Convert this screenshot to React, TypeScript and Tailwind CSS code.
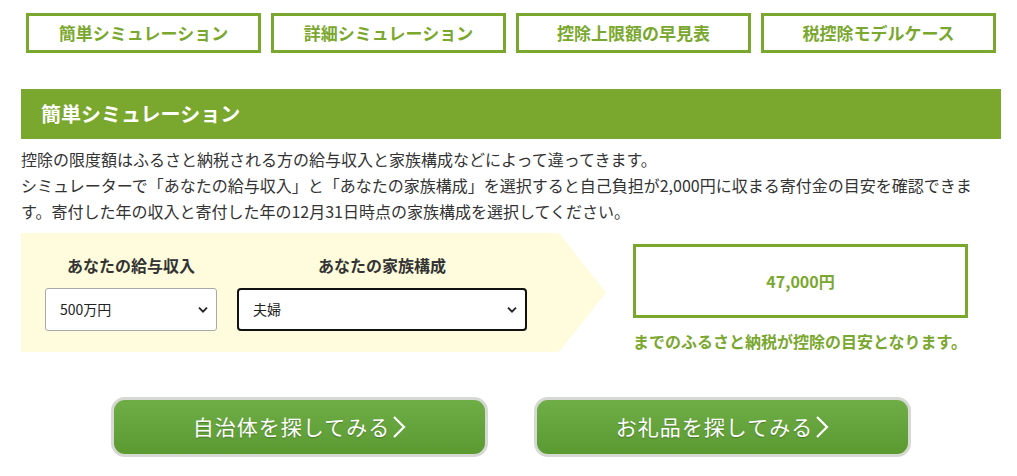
import React from "react";

const FONT = { fontFamily: '"Noto Sans CJK JP", "Noto Sans", sans-serif' };

const tabs = ["簡単シミュレーション", "詳細シミュレーション", "控除上限額の早見表", "税控除モデルケース"];

function Chevron() {
  return (
    <svg width="10" height="7" viewBox="0 0 10 7" className="pointer-events-none absolute right-[8px] top-1/2 -translate-y-1/2">
      <path d="M1 1.2 L5 5.2 L9 1.2" fill="none" stroke="#222" strokeWidth="1.8" />
    </svg>
  );
}

function FakeSelect({ value, className }: { value: string; className: string }) {
  return (
    <div className={"relative flex h-[43px] items-center bg-white pl-[14px] text-[14px] text-[#222] " + className}>
      {value}
      <Chevron />
    </div>
  );
}

function BigButton({ label }: { label: string }) {
  return (
    <button
      type="button"
      className="flex h-[60px] w-[377px] items-center justify-center rounded-[14px] border-[3px] border-[#d6d8d4] bg-gradient-to-b from-[#6fae47] to-[#5b9a31] text-[21px] tracking-[1px] text-white [text-shadow:0_1px_1px_rgba(0,0,0,0.25)]"
    >
      {label}
      <svg width="14" height="24" viewBox="0 0 14 24" className="ml-[2px]">
        <path d="M2 2 L12 12 L2 22" fill="none" stroke="#fff" strokeWidth="2.2" />
      </svg>
    </button>
  );
}

export default function App() {
  return (
    <div className="min-h-[476px] w-[1017px] bg-white" style={FONT}>
      <div className="ml-[21px] w-[980px] pt-[13px]">
        {/* tab links */}
        <div className="flex gap-[10px] px-[5px]">
          {tabs.map((t) => (
            <div
              key={t}
              className="flex h-[40px] w-[235px] items-center justify-center border-[3px] border-[#7aa72e] text-[17px] font-bold text-[#7aa72e]"
            >
              {t}
            </div>
          ))}
        </div>

        {/* section header */}
        <div className="mt-[36px] flex h-[50px] items-center bg-[#7aa72e] pl-[20px] text-[20px] font-bold text-white">
          簡単シミュレーション
        </div>

        <p className="mt-[7px] text-[16px] leading-[26px] text-[#333]">
          控除の限度額はふるさと納税される方の給与収入と家族構成などによって違ってきます。
          <br />
          シミュレーターで「あなたの給与収入」と「あなたの家族構成」を選択すると自己負担が2,000円に収まる寄付金の目安を確認できます。寄付した年の収入と寄付した年の12月31日時点の家族構成を選択してください。
        </p>

        {/* simulator */}
        <div className="mt-[9px] flex items-start">
          <div className="flex h-[119px] w-[585px] items-end gap-[20px] bg-[#fefcdc] pb-[21px] pl-[24px] [clip-path:polygon(0_0,calc(100%-47px)_0,100%_50%,calc(100%-47px)_100%,0_100%)]">
            <div className="flex w-[172px] flex-col items-center">
              <div className="mb-[11px] text-[16px] font-bold text-[#333]">あなたの給与収入</div>
              <FakeSelect value="500万円" className="w-[172px] rounded-[3px] border border-[#a9a9a9]" />
            </div>
            <div className="flex w-[290px] flex-col items-center">
              <div className="mb-[11px] text-[16px] font-bold text-[#333]">あなたの家族構成</div>
              <FakeSelect value="夫婦" className="w-[290px] rounded-[4px] border-2 border-[#111]" />
            </div>
          </div>

          <div className="ml-[27px] mt-[11px] flex flex-col">
            <div className="flex h-[74px] w-[335px] items-center justify-center border-[3px] border-[#7aa72e] text-[16px] font-bold text-[#7aa72e]">
              47,000円
            </div>
            <div className="mt-[11px] text-[16px] font-bold text-[#7aa72e]">
              までのふるさと納税が控除の目安となります。
            </div>
          </div>
        </div>

        {/* search buttons */}
        <div className="mt-[44px] flex justify-center gap-[46px]">
          <BigButton label="自治体を探してみる" />
          <BigButton label="お礼品を探してみる" />
        </div>
      </div>
    </div>
  );
}
